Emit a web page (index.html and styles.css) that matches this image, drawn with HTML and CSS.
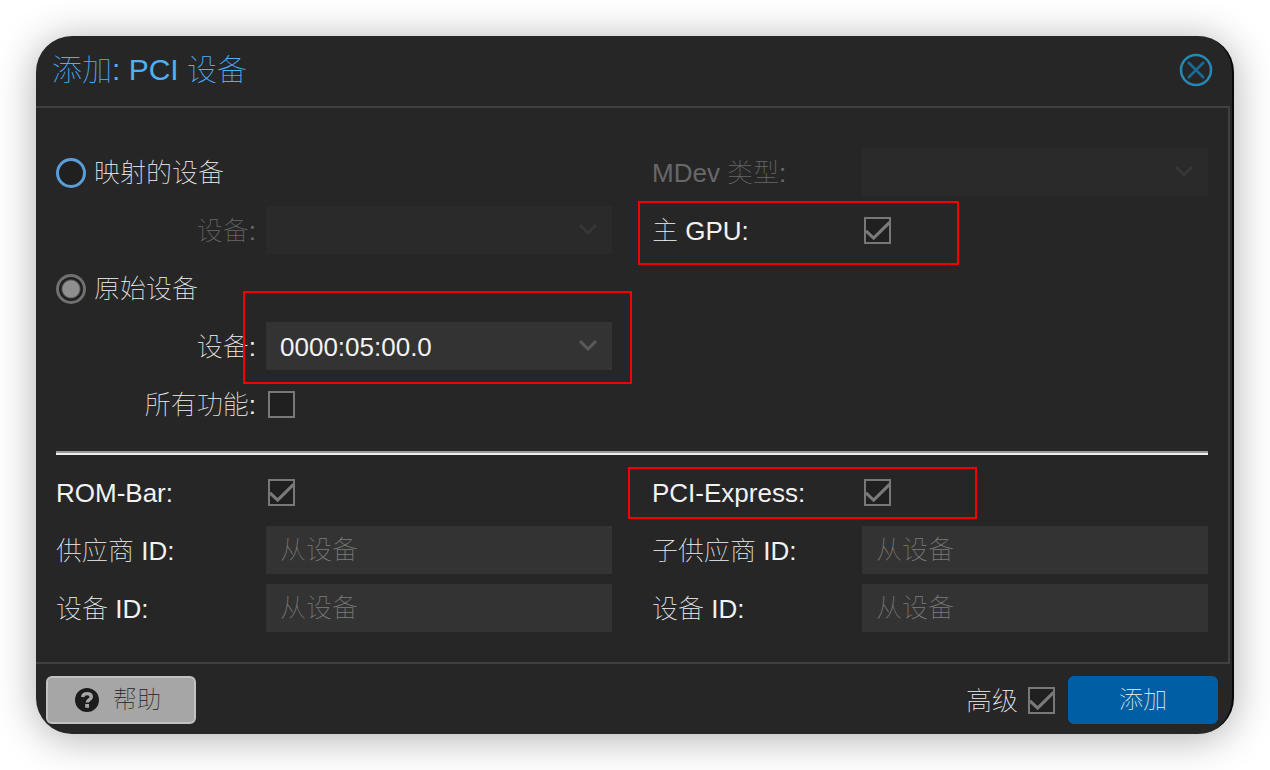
FILE: index.html
```html
<!DOCTYPE html>
<html lang="zh-CN">
<head>
<meta charset="utf-8">
<title>添加: PCI 设备</title>
<link rel="stylesheet" href="styles.css">
</head>
<body>
<svg class="defs" aria-hidden="true">
  <symbol id="tick" viewBox="0 0 28 28"><path d="M2 14.500 L10 21.800 L26.500 5.500" fill="none" stroke="currentColor" stroke-width="3.200"/></symbol>
  <symbol id="chevron" viewBox="0 0 20 12"><path d="M2 2 L10 10 L18 2" fill="none" stroke="currentColor" stroke-width="3"/></symbol>
</svg>
<main class="dialog" role="dialog" aria-labelledby="title">
  <header class="header">
    <h1 class="title" id="title">添加: PCI 设备</h1>
    <button class="close" type="button" aria-label="关闭">
      <svg viewBox="0 0 32 32" width="32" height="32"><circle cx="16" cy="16" r="15" fill="none" stroke="#2787b4" stroke-width="2.600"/><path d="M8 8 L24 24 M24 8 L8 24" fill="none" stroke="#1a6a98" stroke-width="2.600"/></svg>
    </button>
  </header>
  <form class="body">
    <div class="columns">
      <div class="column">
        <div class="row"><label class="option"><input class="radio focused" type="radio" name="source">映射的设备</label></div>
        <div class="row disabled">
          <label class="label nested" for="mapped">设备:</label>
          <span class="combo"><select class="field" id="mapped" disabled><option></option></select><svg class="chevron"><use href="#chevron"/></svg></span>
        </div>
        <div class="row"><label class="option"><input class="radio" type="radio" name="source" checked>原始设备</label></div>
        <div class="row">
          <label class="label nested" for="raw">设备:</label>
          <span class="combo"><select class="field" id="raw"><option>0000:05:00.0</option></select><svg class="chevron"><use href="#chevron"/></svg></span>
          <span class="mark mark-device"></span>
        </div>
        <div class="row">
          <label class="label nested" for="all">所有功能:</label>
          <span class="check"><input class="box" type="checkbox" id="all"><svg class="tick"><use href="#tick"/></svg></span>
        </div>
      </div>
      <div class="column">
        <div class="row disabled">
          <label class="label" for="mdev">MDev 类型:</label>
          <span class="combo"><select class="field" id="mdev" disabled><option></option></select><svg class="chevron"><use href="#chevron"/></svg></span>
        </div>
        <div class="row">
          <label class="label" for="gpu">主 GPU:</label>
          <span class="check"><input class="box" type="checkbox" id="gpu" checked><svg class="tick"><use href="#tick"/></svg></span>
          <span class="mark mark-gpu"></span>
        </div>
      </div>
    </div>
    <hr class="rule">
    <div class="columns">
      <div class="column">
        <div class="row">
          <label class="label" for="rom">ROM-Bar:</label>
          <span class="check"><input class="box" type="checkbox" id="rom" checked><svg class="tick"><use href="#tick"/></svg></span>
        </div>
        <div class="row"><label class="label" for="vendor">供应商 ID:</label><input class="field" id="vendor" type="text" placeholder="从设备"></div>
        <div class="row"><label class="label" for="device">设备 ID:</label><input class="field" id="device" type="text" placeholder="从设备"></div>
      </div>
      <div class="column">
        <div class="row">
          <label class="label" for="pcie">PCI-Express:</label>
          <span class="check"><input class="box" type="checkbox" id="pcie" checked><svg class="tick"><use href="#tick"/></svg></span>
          <span class="mark mark-pcie"></span>
        </div>
        <div class="row"><label class="label" for="subvendor">子供应商 ID:</label><input class="field" id="subvendor" type="text" placeholder="从设备"></div>
        <div class="row"><label class="label" for="subdevice">设备 ID:</label><input class="field" id="subdevice" type="text" placeholder="从设备"></div>
      </div>
    </div>
  </form>
  <footer class="footer">
    <button class="button help" type="button">
      <svg viewBox="0 0 24 24" width="24" height="24"><circle cx="12" cy="12" r="12" fill="#1c1c1c"/><path d="M7.6 9 C8 6.6 9.6 5.6 12 5.6 C14.600 5.600 16.300 7 16.300 9 C16.300 11.600 12.200 11.600 12.200 14.600" fill="none" stroke="#a6a6a6" stroke-width="3.400"/><path d="M10.200 16 H14 V19.800 H10.200 Z" fill="#a6a6a6"/></svg>
      帮助
    </button>
    <label class="advanced" for="advanced">高级</label>
    <span class="check"><input class="box" type="checkbox" id="advanced" checked><svg class="tick"><use href="#tick"/></svg></span>
    <button class="button add" type="button">添加</button>
  </footer>
</main>
</body>
</html>
```

FILE: styles.css
```css
* { box-sizing: border-box; }

body {
  margin: 0;
  padding: 36px;
  background: #fff;
  color: #f2f2f2;
  font: 100 26px/46px "Liberation Sans", "Noto Sans CJK SC", sans-serif;
}

button, input, select { font: inherit; color: inherit; margin: 0; }

.defs { position: absolute; width: 0; height: 0; }

.dialog {
  overflow: hidden;
  border-right: 2px solid #080808;
  border-radius: 36px;
  background: #262626;
  box-shadow: 0 4px 40px rgba(0, 0, 0, 0.32);
}

.header {
  display: flex;
  align-items: center;
  justify-content: space-between;
  height: 70px;
  padding: 0 20px 2px 16px;
}

.title {
  margin: 0;
  color: #4fb0f8;
  font-size: 30px;
  font-weight: 100;
}

.close {
  display: flex;
  padding: 0;
  border: 0;
  background: none;
}

.close svg { overflow: visible; }

.body {
  margin-right: 2px;
  padding: 40px 20px 30px;
  border: 2px solid #404040;
  border-left: 0;
}

.columns {
  display: grid;
  grid-template-columns: 1fr 1fr;
  gap: 40px;
}

.column {
  display: flex;
  flex-direction: column;
  gap: 10px;
}

.row {
  position: relative;
  display: flex;
  align-items: center;
  gap: 10px;
  height: 48px;
}

.label { flex: 0 0 200px; padding-top: 2px; white-space: nowrap; }
.nested { text-align: right; }
.disabled .label { color: #686868; }

.option {
  display: flex;
  align-items: center;
  gap: 8px;
  padding-top: 2px;
}

.combo { display: grid; flex: 1; align-items: center; }
.combo > * { grid-area: 1 / 1; }

.field {
  appearance: none;
  flex: 1;
  width: 100%;
  min-width: 0;
  height: 48px;
  padding: 1px 14px 0;
  border: 0;
  border-radius: 0;
  outline: 0;
  background: #333;
}

.field::placeholder { color: #7c7c7c; opacity: 1; }
.field:disabled { background: #2a2a2a; opacity: 1; }

.chevron {
  justify-self: end;
  width: 20px;
  height: 12px;
  margin: 0 14px 2px 0;
  color: #595959;
  pointer-events: none;
}

.disabled .chevron { color: #363636; }

.check {
  display: grid;
  width: 30px;
  height: 30px;
  place-items: center;
}

.check > * { grid-area: 1 / 1; }

.box {
  appearance: none;
  width: 27px;
  height: 27px;
  border: 2px solid #787878;
  background: #202020;
}

.tick {
  width: 27px;
  height: 27px;
  color: #7a7a7a;
  pointer-events: none;
  visibility: hidden;
}

.box:checked + .tick { visibility: visible; }

.radio {
  appearance: none;
  width: 30px;
  height: 30px;
  border: 3px solid #707070;
  border-radius: 50%;
  background: #202020;
}

.radio:checked { background: radial-gradient(circle, #8f8f8f 8px, #202020 10px); }
.focused { border-color: #5b9ddb; }

.rule {
  height: 4px;
  margin: 23px 0 13px;
  border: 0;
  border-top: 2px solid #9a9a9a;
  border-bottom: 2px solid #eee;
}

.mark {
  position: absolute;
  border: 2px solid #f40000;
  pointer-events: none;
}

.mark-device { top: -31px; left: 187px; right: -20px; height: 93px; }
.mark-gpu { top: -5px; left: -14px; width: 321px; height: 64px; }
.mark-pcie { top: -1px; left: -24px; width: 349px; height: 52px; }

.footer {
  display: flex;
  align-items: center;
  gap: 8px;
  padding: 12px 14px 10px 10px;
}

.advanced { padding-top: 2px; }

.button {
  display: flex;
  align-items: center;
  justify-content: center;
  gap: 14px;
  width: 150px;
  height: 48px;
  padding: 0;
  border: 2px solid #005fa4;
  border-radius: 6px;
  background: #005fa4;
  font-size: 24px;
}

.help {
  margin-right: auto;
  padding-right: 6px;
  border-color: #c1c1c1;
  background: #a6a6a6;
  color: #222;
}

.add { margin-left: 4px; }
```
